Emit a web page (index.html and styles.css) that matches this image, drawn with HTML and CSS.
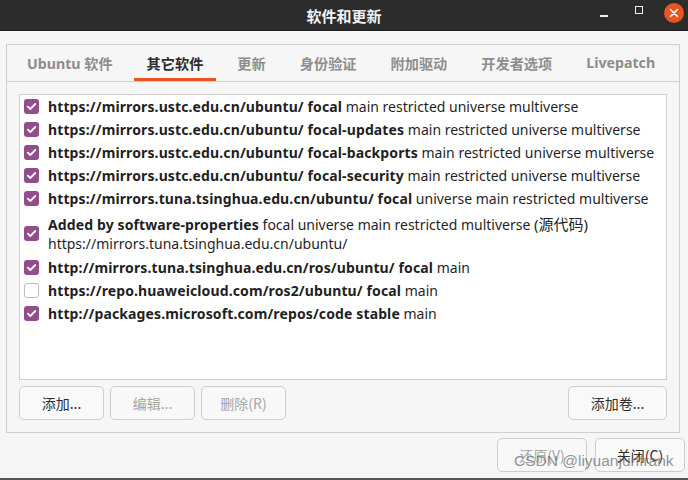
FILE: index.html
```html
<!DOCTYPE html>
<html lang="zh">
<head>
<meta charset="utf-8">
<title>软件和更新</title>
<link rel="stylesheet" href="styles.css">
</head>
<body>
<div class="window">
  <header class="titlebar">
    <span class="title">软件和更新</span>
    <div class="controls">
      <span class="ctl min"></span>
      <span class="ctl max"></span>
      <span class="ctl close">
        <svg width="20" height="20" viewBox="0 0 20 20"><circle cx="10" cy="10" r="10" fill="#e95420"/><path d="M6.5 6.5 L13.5 13.5 M13.5 6.5 L6.5 13.5" stroke="#fff" stroke-width="1.6" stroke-linecap="round"/></svg>
      </span>
    </div>
  </header>
  <main class="content">
    <section class="frame">
      <nav class="tabs">
        <span class="tab">Ubuntu 软件</span>
        <span class="tab active">其它软件</span>
        <span class="tab">更新</span>
        <span class="tab">身份验证</span>
        <span class="tab">附加驱动</span>
        <span class="tab">开发者选项</span>
        <span class="tab">Livepatch</span>
      </nav>
      <div class="body">
        <div class="list">
          <div class="row"><span class="cb on"></span><span class="txt"><b>https://mirrors.ustc.edu.cn/ubuntu/ focal</b> main restricted universe multiverse</span></div>
          <div class="row"><span class="cb on"></span><span class="txt"><b>https://mirrors.ustc.edu.cn/ubuntu/ focal-updates</b> main restricted universe multiverse</span></div>
          <div class="row"><span class="cb on"></span><span class="txt"><b>https://mirrors.ustc.edu.cn/ubuntu/ focal-backports</b> main restricted universe multiverse</span></div>
          <div class="row"><span class="cb on"></span><span class="txt"><b>https://mirrors.ustc.edu.cn/ubuntu/ focal-security</b> main restricted universe multiverse</span></div>
          <div class="row"><span class="cb on"></span><span class="txt"><b>https://mirrors.tuna.tsinghua.edu.cn/ubuntu/ focal</b> universe main restricted multiverse</span></div>
          <div class="row tall"><span class="cb on"></span><span class="txt"><b>Added by software-properties</b> focal universe main restricted multiverse <span class="cjk">(源代码)</span><br>https://mirrors.tuna.tsinghua.edu.cn/ubuntu/</span></div>
          <div class="row"><span class="cb on"></span><span class="txt"><b>http://mirrors.tuna.tsinghua.edu.cn/ros/ubuntu/ focal</b> main</span></div>
          <div class="row"><span class="cb"></span><span class="txt"><b>https://repo.huaweicloud.com/ros2/ubuntu/ focal</b> main</span></div>
          <div class="row"><span class="cb on"></span><span class="txt"><b>http://packages.microsoft.com/repos/code stable</b> main</span></div>
        </div>
        <div class="actions">
          <button class="btn w85">添加...</button>
          <button class="btn w85" disabled>编辑...</button>
          <button class="btn w85" disabled>删除(R)</button>
          <span class="spacer"></span>
          <button class="btn w99">添加卷...</button>
        </div>
      </div>
    </section>
    <div class="footer">
      <button class="btn w90" disabled>还原(V)</button>
      <button class="btn w90">关闭(C)</button>
    </div>
  </main>
  <div class="watermark">CSDN @liyuanjunfrank</div>
</div>
</body>
</html>
```
FILE: styles.css
```css
* { box-sizing: border-box; }
html, body { margin: 0; padding: 0; }
body {
  width: 688px;
  height: 480px;
  overflow: hidden;
  background: #f6f6f6;
  font-family: "Noto Sans", "Noto Sans CJK SC", sans-serif;
  font-size: 14px;
  color: #1f1f1f;
}
.window {
  position: relative;
  width: 688px;
  height: 480px;
  border-bottom: 2px solid #555;
  display: flex;
  flex-direction: column;
}
.titlebar {
  position: relative;
  height: 31px;
  background: #2c2c2c;
  border-bottom: 1px solid #1c1c1c;
  display: flex;
  align-items: center;
  justify-content: center;
}
.title {
  color: #f2f2f2;
  font-weight: bold;
  font-size: 15px;
  font-family: "Noto Sans CJK SC", sans-serif;
}
.controls {
  position: absolute;
  right: 4px;
  top: 3px;
  height: 20px;
  display: flex;
  align-items: center;
}
.ctl { display: block; }
.min { width: 8px; height: 2px; background: #eee; margin-top: 6px; margin-right: 27px; }
.max { width: 8px; height: 8px; border: 1.5px solid #eee; margin-right: 21px; margin-top: -6px; }
.close { width: 20px; height: 20px; }
.close svg { display: block; }
.content {
  flex: 1;
  padding: 13px 3px 0 6px;
  display: flex;
  flex-direction: column;
}
.frame {
  width: 674px;
  height: 389px;
  border: 1px solid #cfcfcf;
  display: flex;
  flex-direction: column;
}
.tabs {
  height: 37px;
  border-bottom: 1px solid #cfcfcf;
  display: flex;
  gap: 8px;
  padding-left: 7px;
}
.tab {
  height: 36px;
  padding: 0 13px;
  display: flex;
  align-items: center;
  font-weight: bold;
  font-size: 14.2px;
  color: #8d8d8d;
  border-bottom: 3px solid transparent;
  padding-top: 2px;
}
.tab.active {
  color: #2d2d2d;
  border-bottom-color: #e95420;
}
.body {
  flex: 1;
  padding: 12px;
  display: flex;
  flex-direction: column;
  gap: 6px;
}
.list {
  height: 286px;
  background: #fff;
  border: 1px solid #cfcfcf;
  padding-left: 4px;
}
.row {
  height: 23px;
  display: flex;
  align-items: center;
  gap: 9px;
  white-space: nowrap;
}
.row.tall {
  height: 46px;
  line-height: 19px;
  padding-top: 1px;
}
.txt b { font-weight: bold; letter-spacing: 0.12px; }
.cjk { font-size: 15px; }
.cb {
  width: 15px;
  height: 15px;
  flex: none;
  border-radius: 3px;
  border: 1px solid #bdbdbd;
  background: #fff;
}
.cb.on {
  border: none;
  background: #924d8b url("data:image/svg+xml;utf8,<svg xmlns='http://www.w3.org/2000/svg' width='15' height='15'><path d='M3.8 7.6 L6.3 10 L11.3 5' fill='none' stroke='white' stroke-width='1.8' stroke-linecap='round' stroke-linejoin='round'/></svg>") no-repeat center;
}
.actions {
  display: flex;
  gap: 6px;
}
.spacer { flex: 1; }
.btn {
  height: 34px;
  border: 1px solid #cdcdcd;
  border-radius: 5px;
  background: #f9f9f9;
  font-family: "Noto Sans CJK SC", "Noto Sans", sans-serif;
  font-size: 14px;
  color: #2d2d2d;
  padding: 0;
}
.btn:disabled { color: #a6a6a6; background: #f8f8f8; }
.w85 { width: 85px; }
.w99 { width: 99px; }
.w90 { width: 90px; }
.footer {
  display: flex;
  justify-content: flex-end;
  gap: 8px;
  padding-top: 5px;
}
.watermark {
  position: absolute;
  left: 514px;
  top: 452px;
  font-family: "Liberation Sans", sans-serif;
  font-size: 15.5px;
  color: rgba(110, 110, 110, 0.75);
}
```
